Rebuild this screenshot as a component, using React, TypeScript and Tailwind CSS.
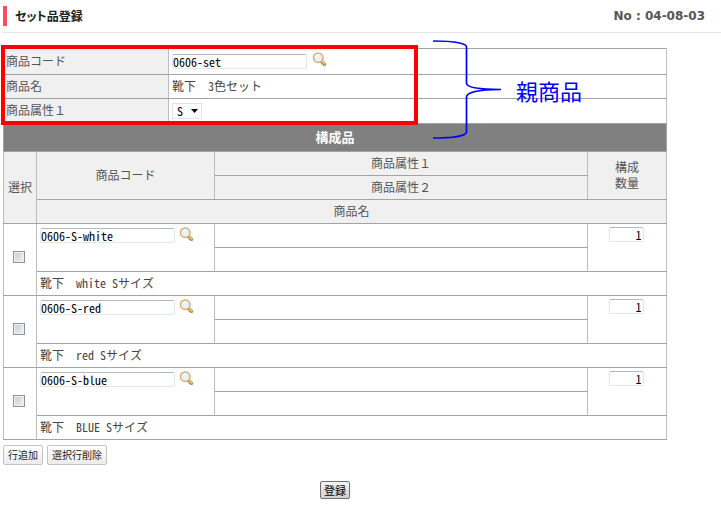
import { useState } from 'react'

type Item = { id: number; code: string; name: string; qty: string }

const initialItems: Item[] = [
  { id: 1, code: '0606-S-white', name: '靴下　white Sサイズ', qty: '1' },
  { id: 2, code: '0606-S-red', name: '靴下　red Sサイズ', qty: '1' },
  { id: 3, code: '0606-S-blue', name: '靴下　BLUE Sサイズ', qty: '1' },
]

const inputClass =
  'h-[15px] rounded-xs border border-[#dfe6ee] border-t-[#b4b8bf] bg-white text-[12px] leading-3 text-black outline-none'
const cell = 'border border-[#a3a3a3] border-x-[#bdbdbd]'
const headCell = 'border border-[#a3a3a3] border-x-[#bdbdbd] bg-[#f0f0f0] pb-[2px] font-normal text-[#555]'

function SearchButton() {
  return (
    <button type="button" aria-label="商品検索" className="shrink-0">
      <svg width="16" height="16" viewBox="0 0 16 16" fill="none">
        <path d="M9.6 9.4 L12.4 12.2" stroke="#b98445" strokeWidth="3.6" strokeLinecap="round" />
        <path d="M10 9.2 L12.6 11.8" stroke="#efc98e" strokeWidth="1.6" strokeLinecap="round" />
        <circle cx="6.2" cy="5.7" r="4.7" fill="#e6f2fc" stroke="#dfae70" strokeWidth="1.6" />
        <path d="M3.6 5.5 A3 3 0 0 1 6 3.1" stroke="#fff" strokeWidth="1.4" strokeLinecap="round" />
      </svg>
    </button>
  )
}

export default function App() {
  const [code, setCode] = useState('0606-set')
  const [items, setItems] = useState(initialItems)
  const [selected, setSelected] = useState<number[]>([])

  const update = (id: number, values: Partial<Item>) =>
    setItems(items.map((i) => (i.id === id ? { ...i, ...values } : i)))

  const toggle = (id: number) =>
    setSelected(selected.includes(id) ? selected.filter((s) => s !== id) : [...selected, id])

  const addRow = () => setItems([...items, { id: Date.now(), code: '', name: '', qty: '' }])

  const deleteRows = () => {
    setItems(items.filter((i) => !selected.includes(i.id)))
    setSelected([])
  }

  return (
    <div className="min-h-screen bg-white pl-[3px] font-['Noto_Sans_Mono_CJK_JP','Noto_Sans_CJK_JP',sans-serif] text-[12px] leading-4 text-[#444]">
      <header className="flex h-[33px] items-center justify-between border-b border-[#e4e4e4] pr-4">
        <h1 className="flex items-center gap-2 font-['Noto_Sans_CJK_JP',sans-serif] text-[12px] font-bold text-[#222] [font-feature-settings:'palt']">
          <span className="h-5 w-1 bg-[#f84c62]" />
          セット品登録
        </h1>
        <p className="font-['DejaVu_Sans',sans-serif] text-[12px] font-bold text-[#555]">No : 04-08-03</p>
      </header>

      <main className="mr-[54px] pt-[15px]">
        <section className="relative">
          <table className="w-full table-fixed border-collapse">
            <colgroup>
              <col className="w-[165px]" />
              <col />
            </colgroup>
            <tbody>
              <tr className="h-[26px]">
                <th className={`${headCell} px-[2px] text-left`}>
                  <label htmlFor="set-code">商品コード</label>
                </th>
                <td className={`${cell} px-[3px]`}>
                  <div className="flex h-5 items-center gap-[5px]">
                    <input
                      id="set-code"
                      className={`${inputClass} w-[135px]`}
                      value={code}
                      onChange={(e) => setCode(e.target.value)}
                    />
                    <div className="self-start">
                      <SearchButton />
                    </div>
                  </div>
                </td>
              </tr>
              <tr className="h-6">
                <th className={`${headCell} px-[2px] text-left`}>商品名</th>
                <td className={`${cell} px-[3px] pb-[2px]`}>靴下　3色セット</td>
              </tr>
              <tr className="h-[25px]">
                <th className={`${headCell} px-[2px] text-left`}>
                  <label htmlFor="set-attr">商品属性１</label>
                </th>
                <td className={`${cell} px-[3px]`}>
                  <div className="relative flex w-[30px] items-center">
                    <select
                      id="set-attr"
                      className="h-4 w-full appearance-none border border-[#dfe3ea] bg-white pl-1 text-[12px] leading-3 text-black"
                    >
                      <option>S</option>
                      <option>M</option>
                      <option>L</option>
                    </select>
                    <svg className="pointer-events-none absolute right-1" width="7" height="4" viewBox="0 0 7 4">
                      <path d="M0 0 H7 L3.5 4 Z" fill="#000" />
                    </svg>
                  </div>
                </td>
              </tr>
            </tbody>
          </table>

          {/* parent product callout */}
          <div className="pointer-events-none absolute -top-[3px] -left-[2px] h-20 w-[417px] border-4 border-[#f00]" />
          <div className="pointer-events-none absolute -top-2 left-[429px] z-10 flex items-center gap-3 text-[#00f]">
            <svg width="72" height="100" viewBox="0 0 72 100" fill="none" stroke="#00f" strokeWidth="1.7">
              <path d="M1 1 C20 1 34.5 3 34.5 7 V43 C34.5 47 44 49.5 69 49.5 C44 49.5 34.5 53 34.5 57 V92 C34.5 96 20 98 1 98" />
            </svg>
            <span className="font-['Noto_Sans_CJK_JP',sans-serif] text-[22px] leading-6">親商品</span>
          </div>
        </section>

        <table className="-mt-px w-full table-fixed border-collapse">
          <colgroup>
            <col className="w-[33px]" />
            <col className="w-[178px]" />
            <col />
            <col className="w-[79px]" />
          </colgroup>
          <thead>
            <tr className="h-7">
              <th
                colSpan={4}
                className="border border-[#a3a3a3] bg-[#808080] pb-[2px] text-[13px] font-bold text-white"
              >
                構成品
              </th>
            </tr>
            <tr className="h-6">
              <th rowSpan={3} className={headCell}>選択</th>
              <th rowSpan={2} className={headCell}>商品コード</th>
              <th className={headCell}>商品属性１</th>
              <th rowSpan={2} className={headCell}>
                構成
                <br />
                数量
              </th>
            </tr>
            <tr className="h-6">
              <th className={headCell}>商品属性２</th>
            </tr>
            <tr className="h-6">
              <th colSpan={3} className={headCell}>商品名</th>
            </tr>
          </thead>
          {items.map((item) => (
            <tbody key={item.id}>
              <tr className="h-6">
                <td rowSpan={3} className={`${cell} pr-[2px] pb-2 text-center`}>
                  <input
                    type="checkbox"
                    aria-label={`${item.code} 選択`}
                    checked={selected.includes(item.id)}
                    onChange={() => toggle(item.id)}
                    className="inline-block size-3 appearance-none border border-[#8e8f8f] bg-linear-to-br from-[#c3c7cc] to-[#f6f6f6] align-middle ring-1 ring-[#f4f4f4] ring-inset checked:from-[#345] checked:to-[#567]"
                  />
                </td>
                <td rowSpan={2} className={`${cell} px-[3px] pt-[3px] align-top`}>
                  <div className="flex items-start gap-1">
                    <input
                      aria-label="商品コード"
                      className={`${inputClass} mt-px w-[135px]`}
                      value={item.code}
                      onChange={(e) => update(item.id, { code: e.target.value })}
                    />
                    <SearchButton />
                  </div>
                </td>
                <td className={cell} />
                <td rowSpan={2} className={`${cell} pt-[3px] text-center align-top`}>
                  <input
                    aria-label="構成数量"
                    className={`${inputClass} mx-auto block w-[35px] pr-[2px] text-right`}
                    value={item.qty}
                    onChange={(e) => update(item.id, { qty: e.target.value })}
                  />
                </td>
              </tr>
              <tr className="h-6">
                <td className={cell} />
              </tr>
              <tr className="h-6">
                <td colSpan={3} className={`${cell} px-[3px] pb-[2px]`}>{item.name}</td>
              </tr>
            </tbody>
          ))}
        </table>

        <div className="flex gap-1 pt-[5px] text-[10px] text-[#222]">
          <button
            type="button"
            onClick={addRow}
            className="h-5 rounded-xs border border-[#c4c4c4] bg-linear-to-b from-white to-[#ececec] px-1"
          >
            行追加
          </button>
          <button
            type="button"
            onClick={deleteRows}
            className="h-5 rounded-xs border border-[#c4c4c4] bg-linear-to-b from-white to-[#ececec] px-1"
          >
            選択行削除
          </button>
        </div>

        <div className="flex justify-center pt-4">
          <button
            type="submit"
            className="h-[18px] rounded-xs border border-[#707070] bg-linear-to-b from-[#f4f4f4] to-[#cfcfcf] px-[3px] text-[11px] leading-4 text-black"
          >
            登録
          </button>
        </div>
      </main>
    </div>
  )
}
